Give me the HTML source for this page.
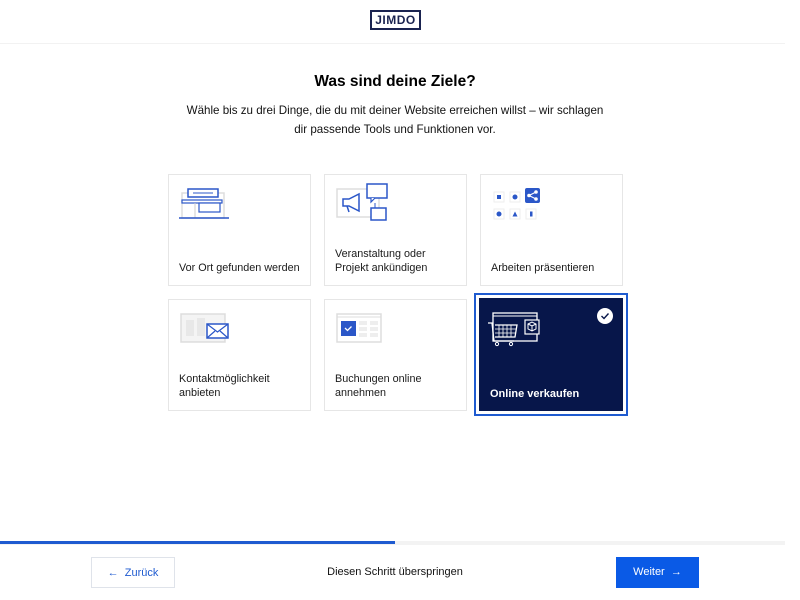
<!DOCTYPE html>
<html><head><meta charset="utf-8"><style>
*{box-sizing:border-box;margin:0;padding:0}
body{width:800px;height:600px;background:#fff;font-family:"Liberation Sans",sans-serif;position:relative;overflow:hidden;color:#0a1640}
.hdr{position:absolute;left:0;top:0;width:785px;height:44px;border-bottom:1px solid #f2f2f2}
.logo{position:absolute;left:370px;top:10px;width:51px;height:20px;border:2px solid #1a2350;font-weight:bold;font-size:12px;text-align:center;line-height:16px;letter-spacing:0.5px;color:#1a2350}
h1{position:absolute;top:73px;left:0;width:790px;text-align:center;font-size:15.5px;font-weight:bold;color:#000}
.sub{position:absolute;top:101px;left:0;width:790px;text-align:center;font-size:11.6px;line-height:19px;color:#111}
.card{position:absolute;width:143px;height:112px;border:1px solid #e6e6e6;background:#fff}
.card .t{position:absolute;left:10px;bottom:10px;font-size:10.8px;line-height:14px;color:#1a1a1a}
.card svg{position:absolute;left:10px;top:8px}
.sel{position:absolute;left:474px;top:293px;width:154px;height:123px;border:2px solid #1f5bd0}
.seli{position:absolute;left:479px;top:298px;width:144px;height:113px;background:#07164a}
.seli .t{position:absolute;left:11px;bottom:11px;font-size:11px;font-weight:bold;color:#fff}
.chk{position:absolute;right:10px;top:10px;width:16px;height:16px;border-radius:50%;background:#fff}
.prog{position:absolute;left:0;top:541px;width:785px;height:4px;background:#f3f3f3}
.prog div{width:395px;height:3px;background:#1f5bd0}
.btn{position:absolute;top:557px;height:31px;font-size:11px;line-height:31px;text-align:center}
.back{left:91px;width:84px;border:1px solid #dfe3ea;color:#1f5bd0}
.next{left:616px;width:83px;background:#0a5ae6;color:#fff}
.skip{position:absolute;top:557px;left:300px;width:190px;line-height:31px;text-align:center;font-size:11px;color:#111}
</style></head><body>
<div class="hdr"><div class="logo">JIMDO</div></div>
<h1>Was sind deine Ziele?</h1>
<div class="sub">Wähle bis zu drei Dinge, die du mit deiner Website erreichen willst – wir schlagen<br>dir passende Tools und Funktionen vor.</div>

<div class="card" style="left:168px;top:174px"><svg width="60" height="40" viewBox="0 0 60 40"><rect x="3" y="10" width="42" height="25" fill="none" stroke="#ddd" stroke-width="1.5"/><rect x="9" y="6" width="30" height="8" fill="#fff" stroke="#2b57c8" stroke-width="1.5"/><line x1="14" y1="10" x2="34" y2="10" stroke="#2b57c8"/><rect x="3" y="17" width="40" height="3" fill="#fff" stroke="#2b57c8" stroke-width="1.2"/><rect x="20" y="20" width="21" height="9" fill="#fff" stroke="#2b57c8" stroke-width="1.2"/><line x1="16" y1="20" x2="16" y2="35" stroke="#ccc"/><line x1="0" y1="35" x2="50" y2="35" stroke="#2b57c8" stroke-width="1.5"/></svg><div class="t">Vor Ort gefunden werden</div></div>
<div class="card" style="left:324px;top:174px"><svg width="60" height="42" viewBox="0 0 60 42"><rect x="2" y="6" width="42" height="28" fill="none" stroke="#ddd" stroke-width="1.5"/><path d="M8 22 v-6 h6 l10 -5 v17 l-10 -5 h-6z M12 23 l2 6" fill="#fff" stroke="#2b57c8" stroke-width="1.5"/><rect x="32" y="1" width="20" height="14" fill="#fff" stroke="#2b57c8" stroke-width="1.5"/><path d="M36 15 v4 l4 -4" fill="#fff" stroke="#2b57c8" stroke-width="1.2"/><rect x="36" y="25" width="15" height="12" fill="#fff" stroke="#2b57c8" stroke-width="1.5"/><line x1="40" y1="20" x2="40" y2="25" stroke="#2b57c8"/></svg><div class="t">Veranstaltung oder<br>Projekt ankündigen</div></div>
<div class="card" style="left:480px;top:174px"><svg width="60" height="42" viewBox="0 0 60 42"><rect x="3" y="9" width="10" height="10" fill="#fff" stroke="#eee"/><rect x="6" y="12" width="4" height="4" fill="#2b57c8"/><rect x="19" y="9" width="10" height="10" fill="#fff" stroke="#eee"/><circle cx="24" cy="14" r="2.5" fill="#2b57c8"/><rect x="34" y="5" width="15" height="15" rx="2" fill="#2b57c8"/><circle cx="38" cy="12.5" r="1.8" fill="#fff"/><circle cx="45" cy="9" r="1.8" fill="#fff"/><circle cx="45" cy="16" r="1.8" fill="#fff"/><path d="M38 12.5 L45 9 M38 12.5 L45 16" stroke="#fff" stroke-width="1"/><rect x="3" y="26" width="10" height="10" fill="#fff" stroke="#eee"/><circle cx="8" cy="31" r="2.5" fill="#2b57c8"/><rect x="19" y="26" width="10" height="10" fill="#fff" stroke="#eee"/><path d="M21.5 33.5 L24 28.5 L26.5 33.5z" fill="#2b57c8"/><rect x="35" y="26" width="10" height="10" fill="#fff" stroke="#eee"/><rect x="39" y="28.5" width="2.5" height="5" fill="#2b57c8"/></svg><div class="t">Arbeiten präsentieren</div></div>
<div class="card" style="left:168px;top:299px"><svg width="60" height="42" viewBox="0 0 60 42"><rect x="2" y="6" width="44" height="28" fill="#f4f4f4" stroke="#ddd" stroke-width="1.5"/><rect x="7" y="12" width="8" height="16" fill="#e8e8e8"/><rect x="18" y="10" width="8" height="18" fill="#e8e8e8"/><rect x="28" y="16" width="21" height="14" fill="#fff" stroke="#2b57c8" stroke-width="1.5"/><path d="M28 16 l10.5 8 l10.5 -8 M28 30 l8 -7 M49 30 l-8 -7" fill="none" stroke="#2b57c8" stroke-width="1.2"/></svg><div class="t">Kontaktmöglichkeit<br>anbieten</div></div>
<div class="card" style="left:324px;top:299px"><svg width="60" height="42" viewBox="0 0 60 42"><rect x="2" y="6" width="44" height="28" fill="#fff" stroke="#ddd" stroke-width="1.5"/><line x1="2" y1="9" x2="46" y2="9" stroke="#ddd"/><rect x="6" y="13" width="15" height="15" fill="#2b57c8"/><path d="M10 20 l2.5 2.5 l4 -4" fill="none" stroke="#fff" stroke-width="1.3"/><g fill="#eee"><rect x="24" y="13" width="8" height="4"/><rect x="35" y="13" width="8" height="4"/><rect x="24" y="19" width="8" height="4"/><rect x="35" y="19" width="8" height="4"/><rect x="24" y="25" width="8" height="4"/><rect x="35" y="25" width="8" height="4"/></g></svg><div class="t">Buchungen online<br>annehmen</div></div>
<div class="sel"></div>
<div class="seli"><svg style="position:absolute;left:9px;top:12px" width="60" height="40" viewBox="0 0 60 40"><rect x="5" y="3" width="44" height="28" fill="none" stroke="#fff" stroke-width="1.3"/><line x1="5" y1="6" x2="49" y2="6" stroke="#fff"/><path d="M0 13 h4 l2 18 h20 M7 15 h22 l-2 12 h-20" fill="none" stroke="#fff" stroke-width="1.3"/><path d="M11 15 v12 M15 15 v12 M19 15 v12 M23 15 v12 M7 19 h21 M7 23 h21" stroke="#fff" stroke-width="0.8"/><circle cx="9" cy="34" r="1.6" fill="none" stroke="#fff"/><circle cx="23" cy="34" r="1.6" fill="none" stroke="#fff"/><rect x="37" y="10" width="14" height="14" fill="#07164a" stroke="#fff" stroke-width="1.2"/><path d="M40 14 l4 -2 l4 2 v5 l-4 2 l-4 -2z M40 14 l4 2 l4 -2 M44 16 v5" fill="none" stroke="#fff" stroke-width="1"/></svg><div class="chk"><svg width="16" height="16"><path d="M4.5 8 l2.5 2.5 l4.5 -5" fill="none" stroke="#07164a" stroke-width="1.4"/></svg></div><div class="t">Online verkaufen</div></div>

<div class="prog"><div></div></div>
<div class="btn back">←&nbsp; Zurück</div>
<div class="skip">Diesen Schritt überspringen</div>
<div class="btn next">Weiter &nbsp;→</div>
</body></html>
